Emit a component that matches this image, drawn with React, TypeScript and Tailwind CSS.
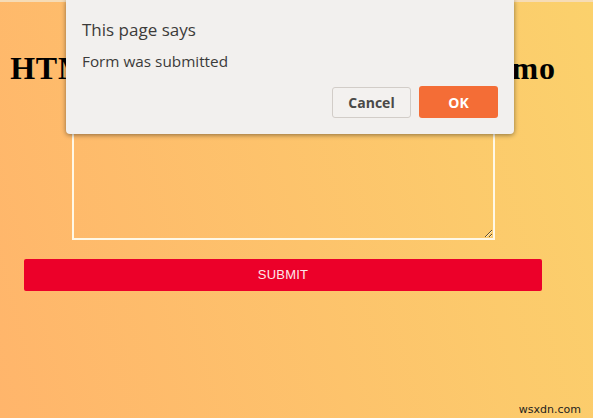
import React from "react";

export default function App() {
  return (
    <div className="relative w-[593px] h-[418px] overflow-hidden bg-linear-[75deg] from-[#ffb56b] to-[#fbd16c]">
      <div className="h-[2px] bg-[#f6dcb6]" />
      <div className="w-[566px] flex flex-col items-center pt-[49px]">
        <h1
          className="whitespace-nowrap text-[32px] font-bold text-black tracking-[0.8px] leading-[35px]"
          style={{ fontFamily: '"Liberation Serif", serif' }}
        >
          HTML Form Submission Event Demo
        </h1>
        <textarea
          className="mt-[19px] w-[423px] h-[135px] border-2 border-[#fff8e6] bg-transparent resize-y outline-none"
          defaultValue=""
        />
        <button
          className="mt-[19px] w-[518px] h-[32px] rounded-[2px] bg-[#ec0029] text-[13px] text-[#fde8ea] tracking-[0.2px]"
          style={{ fontFamily: '"Liberation Sans", Arial, sans-serif' }}
        >
          SUBMIT
        </button>
      </div>

      <div
        className="absolute left-[66px] top-0 w-[448px] h-[134px] bg-[#f2f0ee] rounded-b-[4px] shadow-[0_1px_5px_rgba(0,0,0,0.45)] flex flex-col px-[16px] pt-[17px] pb-[16px]"
        style={{ fontFamily: '"Open Sans", "Noto Sans", sans-serif' }}
      >
        <div className="text-[17px] leading-[26px] text-[#3c3b3a]">This page says</div>
        <div className="mt-[8px] text-[15.3px] leading-[20px] text-[#3c3b3a]">Form was submitted</div>
        <div className="mt-auto flex justify-end gap-[8px]">
          <button className="w-[79px] h-[31px] mt-[1px] rounded-[3px] border border-[#d2cdc8] bg-[#f3f1ef] text-[14px] font-bold text-[#4a4948]">
            Cancel
          </button>
          <button className="w-[79px] h-[32px] rounded-[3px] bg-[#f46d36] text-[14px] font-bold text-white">
            OK
          </button>
        </div>
      </div>

      <div
        className="absolute right-[12px] bottom-0 text-[11px] text-[#1e1e1e]"
        style={{ fontFamily: '"DejaVu Sans", sans-serif' }}
      >
        wsxdn.com
      </div>
    </div>
  );
}
